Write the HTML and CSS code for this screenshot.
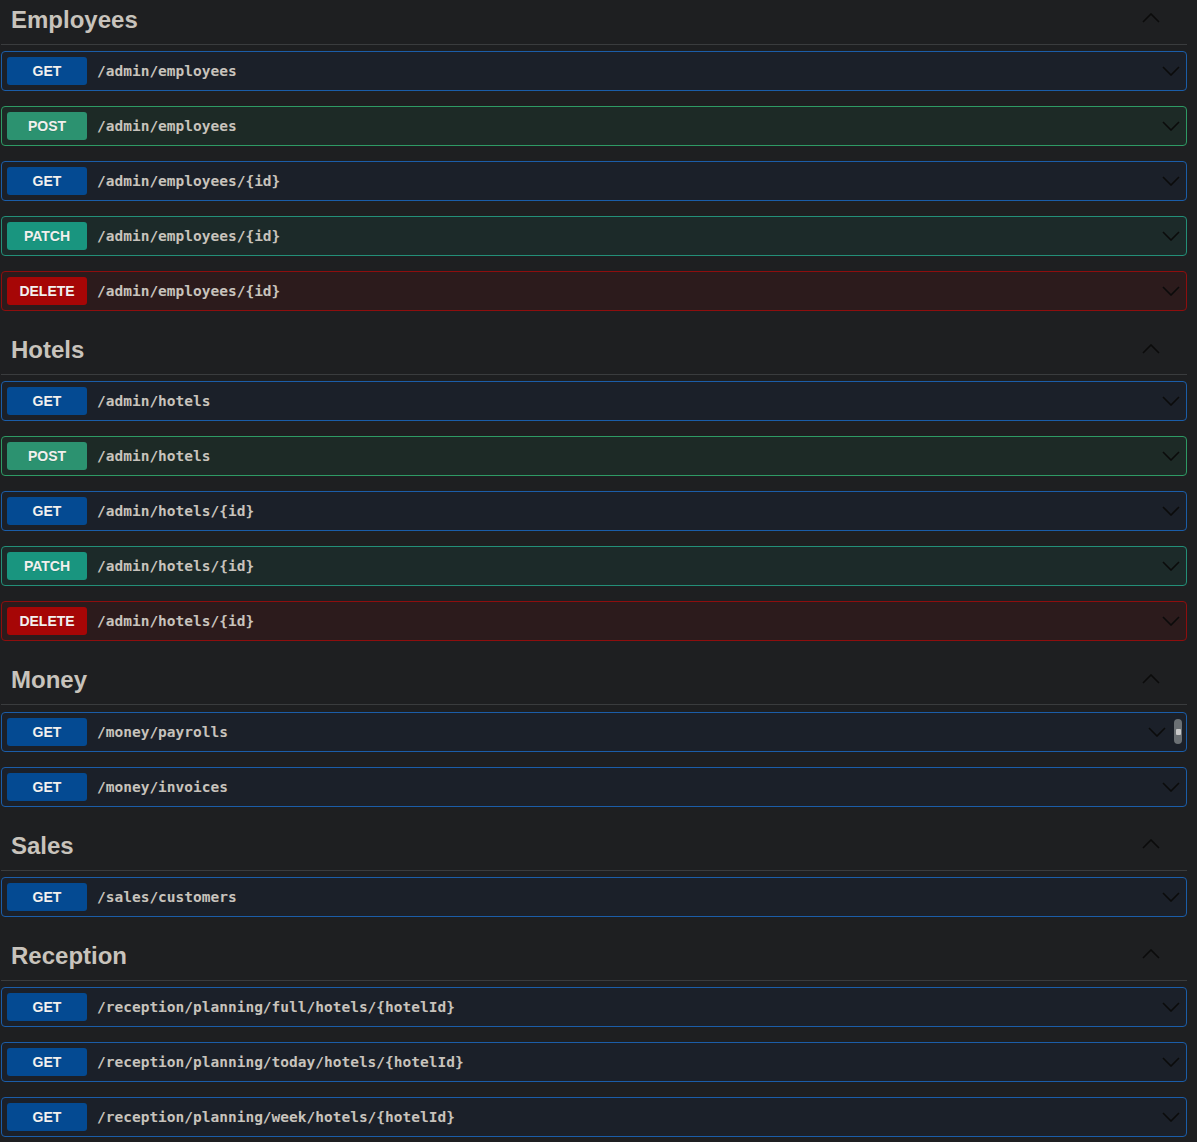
FILE: index.html
```html
<!DOCTYPE html>
<html>
<head>
<meta charset="utf-8">
<link rel="stylesheet" href="styles.css">
</head>
<body>
<div class="page">
  <section class="tag">
    <h3 class="tag-head"><span>Employees</span><svg class="up" viewBox="0 0 18 10"><polyline points="1,9 9,1 17,9"/></svg></h3>
    <div class="op get"><span class="method">GET</span><span class="path">/admin/employees</span><svg class="down" viewBox="0 0 18 10"><polyline points="1,1 9,9 17,1"/></svg></div>
    <div class="op post"><span class="method">POST</span><span class="path">/admin/employees</span><svg class="down" viewBox="0 0 18 10"><polyline points="1,1 9,9 17,1"/></svg></div>
    <div class="op get"><span class="method">GET</span><span class="path">/admin/employees/{id}</span><svg class="down" viewBox="0 0 18 10"><polyline points="1,1 9,9 17,1"/></svg></div>
    <div class="op patch"><span class="method">PATCH</span><span class="path">/admin/employees/{id}</span><svg class="down" viewBox="0 0 18 10"><polyline points="1,1 9,9 17,1"/></svg></div>
    <div class="op delete"><span class="method">DELETE</span><span class="path">/admin/employees/{id}</span><svg class="down" viewBox="0 0 18 10"><polyline points="1,1 9,9 17,1"/></svg></div>
  </section>
  <section class="tag">
    <h3 class="tag-head"><span>Hotels</span><svg class="up" viewBox="0 0 18 10"><polyline points="1,9 9,1 17,9"/></svg></h3>
    <div class="op get"><span class="method">GET</span><span class="path">/admin/hotels</span><svg class="down" viewBox="0 0 18 10"><polyline points="1,1 9,9 17,1"/></svg></div>
    <div class="op post"><span class="method">POST</span><span class="path">/admin/hotels</span><svg class="down" viewBox="0 0 18 10"><polyline points="1,1 9,9 17,1"/></svg></div>
    <div class="op get"><span class="method">GET</span><span class="path">/admin/hotels/{id}</span><svg class="down" viewBox="0 0 18 10"><polyline points="1,1 9,9 17,1"/></svg></div>
    <div class="op patch"><span class="method">PATCH</span><span class="path">/admin/hotels/{id}</span><svg class="down" viewBox="0 0 18 10"><polyline points="1,1 9,9 17,1"/></svg></div>
    <div class="op delete"><span class="method">DELETE</span><span class="path">/admin/hotels/{id}</span><svg class="down" viewBox="0 0 18 10"><polyline points="1,1 9,9 17,1"/></svg></div>
  </section>
  <section class="tag">
    <h3 class="tag-head"><span>Money</span><svg class="up" viewBox="0 0 18 10"><polyline points="1,9 9,1 17,9"/></svg></h3>
    <div class="op get"><span class="method">GET</span><span class="path">/money/payrolls</span><svg class="down" viewBox="0 0 18 10"><polyline points="1,1 9,9 17,1"/></svg><span class="pill"><span class="pill-dot"></span></span></div>
    <div class="op get"><span class="method">GET</span><span class="path">/money/invoices</span><svg class="down" viewBox="0 0 18 10"><polyline points="1,1 9,9 17,1"/></svg></div>
  </section>
  <section class="tag">
    <h3 class="tag-head"><span>Sales</span><svg class="up" viewBox="0 0 18 10"><polyline points="1,9 9,1 17,9"/></svg></h3>
    <div class="op get"><span class="method">GET</span><span class="path">/sales/customers</span><svg class="down" viewBox="0 0 18 10"><polyline points="1,1 9,9 17,1"/></svg></div>
  </section>
  <section class="tag">
    <h3 class="tag-head"><span>Reception</span><svg class="up" viewBox="0 0 18 10"><polyline points="1,9 9,1 17,9"/></svg></h3>
    <div class="op get"><span class="method">GET</span><span class="path">/reception/planning/full/hotels/{hotelId}</span><svg class="down" viewBox="0 0 18 10"><polyline points="1,1 9,9 17,1"/></svg></div>
    <div class="op get"><span class="method">GET</span><span class="path">/reception/planning/today/hotels/{hotelId}</span><svg class="down" viewBox="0 0 18 10"><polyline points="1,1 9,9 17,1"/></svg></div>
    <div class="op get"><span class="method">GET</span><span class="path">/reception/planning/week/hotels/{hotelId}</span><svg class="down" viewBox="0 0 18 10"><polyline points="1,1 9,9 17,1"/></svg></div>
  </section>
</div>
</body>
</html>
```

FILE: styles.css
```css
html, body {
  margin: 0;
  padding: 0;
  background: #1e1f21;
}
body {
  overflow: hidden;
  font-family: "Liberation Sans", Arial, sans-serif;
}
.page {
  margin: -4.25px 10px 0 1px;
  width: 1186px;
}
.tag-head {
  display: flex;
  align-items: center;
  justify-content: space-between;
  margin: 0 0 6.25px 0;
  padding: 9px 27px 9px 10px;
  height: 30px;
  line-height: 30px;
  font-size: 24px;
  font-weight: 700;
  color: #c8c3bc;
  border-bottom: 1px solid #3a3c3e;
}
.tag-head .up {
  width: 18px;
  height: 10px;
  margin-top: -3px;
  fill: none;
  stroke: #0b0b0b;
  stroke-width: 1.6;
}
.op {
  box-sizing: border-box;
  display: flex;
  align-items: center;
  height: 40px;
  margin: 0 0 15px 0;
  padding: 5px;
  border: 1px solid;
  border-radius: 4px;
}
.method {
  box-sizing: border-box;
  width: 80px;
  height: 28px;
  line-height: 28px;
  text-align: center;
  border-radius: 3px;
  font-size: 14px;
  font-weight: 700;
  color: #f2f0ee;
  text-shadow: 0 1px 0 rgba(0,0,0,0.1);
}
.path {
  flex: 1;
  padding-left: 10px;
  font-family: "DejaVu Sans Mono", monospace;
  font-size: 14.5px;
  font-weight: 700;
  color: #c8c3bc;
}
.down {
  width: 18px;
  height: 10px;
  margin-right: 1px;
  fill: none;
  stroke: #0b0b0b;
  stroke-width: 1.6;
}
.get { background: #1b2029; border-color: #1b5da8; }
.get .method { background: #044a92; }
.post { background: #1d2a26; border-color: #2e9a64; }
.post .method { background: #2c9270; }
.patch { background: #1c2a29; border-color: #238f78; }
.patch .method { background: #19957f; }
.delete { background: #2c1b1c; border-color: #8e0e0e; }
.delete .method { background: #a60606; }
.pill {
  display: flex;
  align-items: center;
  justify-content: center;
  width: 8px;
  height: 25px;
  margin-left: 7px;
  margin-right: -1px;
  border-radius: 4px;
  background: #6b7074;
}
.pill-dot {
  width: 5px;
  height: 6px;
  border-radius: 1px;
  background: #c9c9c9;
}
```
